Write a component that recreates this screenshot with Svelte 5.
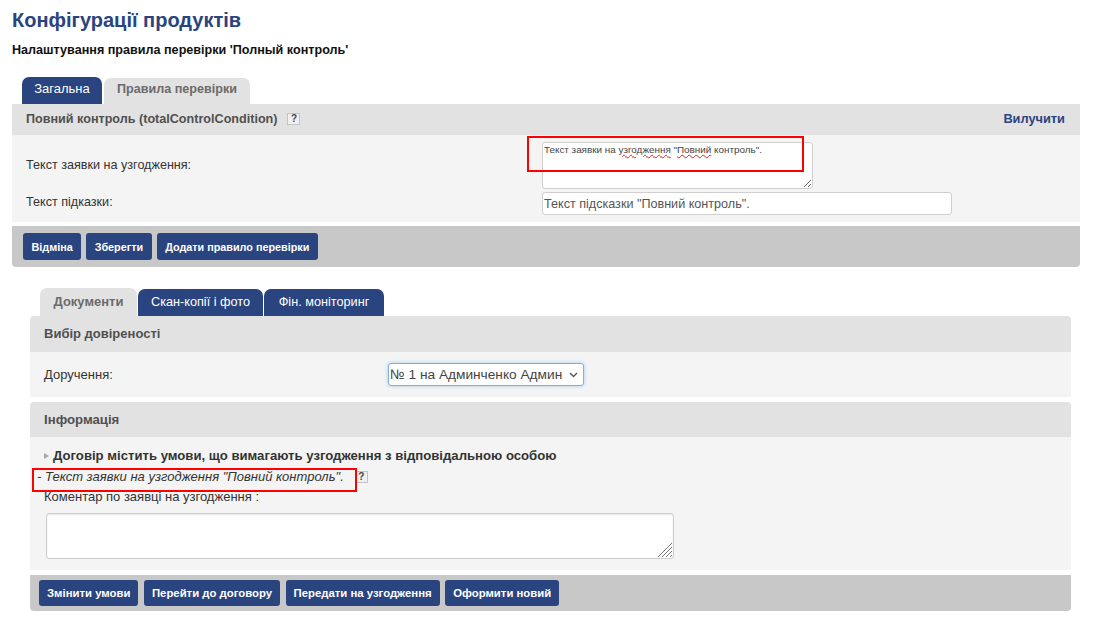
<script>
  const topButtons = ['Відміна', 'Зберегти', 'Додати правило перевірки'];
  const bottomButtons = ['Змінити умови', 'Перейти до договору', 'Передати на узгодження', 'Оформити новий'];
  const docTabs = ['Документи', 'Скан-копії і фото', 'Фін. моніторинг'];
</script>

<div class="page">
  <h1 class="title">Конфігурації продуктів</h1>
  <h2 class="subtitle">Налаштування правила перевірки 'Полный контроль'</h2>

  <div class="tabs top-tabs">
    <div class="tab active-blue">Загальна</div>
    <div class="tab grey second">Правила перевірки</div>
  </div>

  <section class="rule-panel">
    <div class="panel-head rule-head">
      <span class="head-title">Повний контроль (totalControlCondition)<span class="help head-help">?</span></span>
      <a class="remove" href="#remove">Вилучити</a>
    </div>
    <div class="rule-body">
      <div class="form-row first-row">
        <span class="label">Текст заявки на узгодження:</span>
        <div class="fake-area">Текст заявки на <span class="typo">узгодження</span> "<span class="typo">Повний</span> контроль".</div>
      </div>
      <div class="form-row second-row">
        <span class="label">Текст підказки:</span>
        <input class="hint-input" value={'Текст підсказки "Повний контроль".'} />
      </div>
    </div>
    <div class="button-bar top-bar">
      {#each topButtons as b}
        <button class="btn small">{b}</button>
      {/each}
    </div>
    <div class="red-box box-one"></div>
  </section>

  <section class="doc-section">
    <div class="tabs doc-tabs">
      {#each docTabs as t, i}
        <div class="tab doc-tab {i === 0 ? 'grey' : 'active-blue'}">{t}</div>
      {/each}
    </div>

    <div class="panel-head doc-head">Вибір довіреності</div>
    <div class="select-body">
      <span class="label select-label">Доручення:</span>
      <select class="proxy">
        <option>№ 1 на Админченко Админ</option>
      </select>
    </div>

    <div class="panel-head doc-head info-head">Інформація</div>
    <div class="info-body">
      <div class="notice"><span class="arrow"></span>Договір містить умови, що вимагають узгодження з відповідальною особою</div>
      <div class="condition"><em>- Текст заявки на узгодження "Повний контроль".</em><span class="help cond-help">?</span></div>
      <div class="comment-label">Коментар по заявці на узгодження :</div>
      <textarea class="comment"></textarea>
      <svg class="grip" width="14" height="14" viewBox="0 0 14 14" aria-hidden="true">
        <path d="M0 14 14 0M4 14 14 4M8 14 14 8M12 14 14 12" stroke="#777" stroke-width="1" fill="none" />
      </svg>
    </div>
    <div class="button-bar doc-bar">
      {#each bottomButtons as b}
        <button class="btn">{b}</button>
      {/each}
    </div>
    <div class="red-box box-two"></div>
  </section>
</div>

<style>
  :global(body) {
    margin: 0;
    background: #fff;
    font-family: "Liberation Sans", Arial, sans-serif;
  }

  .page {
    padding: 0 14px 0 12px;
    height: 617px;
    overflow: hidden;
    box-sizing: border-box;
  }

  .title {
    margin: 0;
    padding-top: 9px;
    font-size: 20px;
    line-height: 22px;
    font-weight: bold;
    color: #2a4480;
  }

  .subtitle {
    margin: 12px 0 0;
    font-size: 12.6px;
    line-height: 15px;
    font-weight: bold;
    color: #111;
  }

  .tabs {
    display: flex;
    align-items: flex-end;
  }

  .top-tabs {
    margin-top: 19px;
    padding-left: 10px;
    height: 27px;
  }

  .tab {
    box-sizing: border-box;
    border-radius: 7px 7px 0 0;
    font-size: 13px;
    text-align: center;
  }

  .active-blue {
    background: #2a4480;
    color: #fff;
    height: 27px;
    line-height: 24px;
    width: 80px;
  }

  .grey {
    background: #e2e2e2;
    color: #6b6b6b;
    font-weight: bold;
    height: 26px;
    line-height: 23px;
    font-size: 12.6px;
  }

  .second {
    width: 146px;
    margin-left: 2px;
  }

  .rule-panel {
    position: relative;
  }

  .panel-head {
    background: #e2e2e2;
    color: #505050;
    font-weight: bold;
    font-size: 13px;
  }

  .rule-head {
    display: flex;
    justify-content: space-between;
    align-items: center;
    box-sizing: border-box;
    height: 31px;
    padding: 0 15px 2px 14px;
    font-size: 12.6px;
  }

  .head-title {
    display: flex;
    align-items: center;
  }

  .remove {
    color: #2a4480;
    text-decoration: none;
    font-size: 12.8px;
  }

  .help {
    box-sizing: border-box;
    display: inline-block;
    width: 13px;
    height: 12px;
    border: 1px solid #c4c4c4;
    background: #f0f0f0;
    color: #444;
    font-size: 10px;
    font-weight: bold;
    font-style: normal;
    line-height: 10px;
    text-align: center;
  }

  .head-help {
    margin-left: 10px;
  }

  .rule-body {
    background: #f4f4f4;
    height: 87px;
    padding: 7px 14px 0;
    box-sizing: border-box;
  }

  .form-row {
    display: flex;
    align-items: center;
    color: #333;
  }

  .first-row {
    height: 47px;
    margin-bottom: 3px;
  }

  .first-row .label {
    padding-bottom: 2px;
  }

  .second-row .label {
    padding-bottom: 4px;
  }

  .label {
    width: 516px;
    font-size: 12.6px;
    color: #333;
    flex-shrink: 0;
  }

  .fake-area {
    box-sizing: border-box;
    width: 271px;
    height: 47px;
    background: #fff;
    border: 1px solid #cfcfcf;
    border-radius: 3px;
    padding: 1px;
    font-size: 9.9px;
    line-height: 12px;
    color: #444;
    resize: both;
    overflow: hidden;
  }

  .typo {
    text-decoration: underline wavy #e0201c;
    text-decoration-thickness: 1px;
  }

  .hint-input {
    box-sizing: border-box;
    width: 410px;
    height: 23px;
    padding: 0 1px;
    background: #fff;
    border: 1px solid #cfcfcf;
    border-radius: 3px;
    font: 12.6px "Liberation Sans", Arial, sans-serif;
    color: #555;
    outline: none;
  }

  .button-bar {
    display: flex;
    align-items: center;
    background: #c8c8c8;
    border-radius: 0 0 4px 4px;
  }

  .top-bar {
    margin-top: 4px;
    height: 41px;
    padding-left: 11px;
    gap: 5px;
  }

  .btn {
    height: 27px;
    padding: 0 9px;
    border: none;
    border-radius: 3px;
    background: #2a4480;
    color: #fff;
    font: bold 11.35px "Liberation Sans", Arial, sans-serif;
  }

  .btn.small {
    padding: 0 8.5px;
    font-size: 10.8px;
  }

  .red-box {
    position: absolute;
    box-sizing: border-box;
    border: 2px solid #f00;
    pointer-events: none;
  }

  .box-one {
    left: 515px;
    top: 32px;
    width: 277px;
    height: 36px;
  }

  .doc-section {
    position: relative;
    margin: 22px 9px 0 18px;
  }

  .doc-tabs {
    padding-left: 10px;
    height: 27px;
    gap: 1px;
  }

  .doc-tab:nth-child(1) {
    width: 97px;
    height: 28px;
    line-height: 28px;
    font-size: 13px;
  }

  .doc-tab:nth-child(2) {
    width: 125px;
    font-size: 12.7px;
    line-height: 27px;
  }

  .doc-tab:nth-child(3) {
    width: 120px;
    font-size: 12.7px;
    line-height: 27px;
  }

  .doc-head {
    height: 36px;
    line-height: 36px;
    padding-left: 14px;
    border-radius: 4px 4px 0 0;
  }

  .select-body {
    display: flex;
    align-items: center;
    height: 45px;
    padding-left: 14px;
    background: #f4f4f4;
  }

  .select-label {
    width: 344px;
    font-size: 13px;
  }

  .proxy {
    box-sizing: border-box;
    appearance: none;
    width: 196px;
    height: 23px;
    padding: 0 0 0 1px;
    background: #fff url("data:image/svg+xml,%3Csvg xmlns='http://www.w3.org/2000/svg' width='9' height='6'%3E%3Cpath d='M1 1l3.5 3.5L8 1' fill='none' stroke='%23555' stroke-width='1.4'/%3E%3C/svg%3E") no-repeat right 5px center;
    border: 1px solid #7fb0e0;
    border-radius: 3px;
    box-shadow: 0 0 4px #a9cdf0;
    font: 13.7px "Liberation Sans", Arial, sans-serif;
    color: #444;
  }

  .info-head {
    margin-top: 5px;
    height: 35px;
    line-height: 35px;
    font-size: 13.2px;
  }

  .info-body {
    position: relative;
    height: 133px;
    padding-top: 11px;
    box-sizing: border-box;
    background: #f4f4f4;
    font-size: 13px;
    color: #333;
  }

  .notice {
    display: flex;
    align-items: center;
    padding-left: 14px;
    font-size: 13.15px;
    line-height: 16px;
    font-weight: bold;
  }

  .arrow {
    width: 0;
    height: 0;
    margin-right: 4px;
    border-left: 5px solid #a9a9a9;
    border-top: 3px solid transparent;
    border-bottom: 3px solid transparent;
  }

  .condition {
    display: flex;
    align-items: center;
    margin-top: 6px;
    padding-left: 7px;
    line-height: 14px;
  }

  .cond-help {
    margin-left: 11px;
  }

  .comment-label {
    margin-top: 6px;
    padding-left: 14px;
    line-height: 14px;
  }

  .comment {
    display: block;
    box-sizing: border-box;
    width: 628px;
    height: 46px;
    margin: 9px 0 0 16px;
    background: #fff;
    border: 1px solid #cccccc;
    border-radius: 3px;
    box-shadow: inset 0 1px 2px #e8e8e8;
    outline: none;
    resize: none;
  }

  .grip {
    position: absolute;
    left: 628px;
    top: 106px;
  }

  .doc-bar {
    margin-top: 5px;
    height: 36px;
    padding-left: 9px;
    gap: 5.5px;
  }

  .doc-bar .btn {
    height: 26px;
    padding: 0 8px;
  }

  .box-two {
    left: 2px;
    top: 179px;
    width: 325px;
    height: 24px;
  }
</style>
